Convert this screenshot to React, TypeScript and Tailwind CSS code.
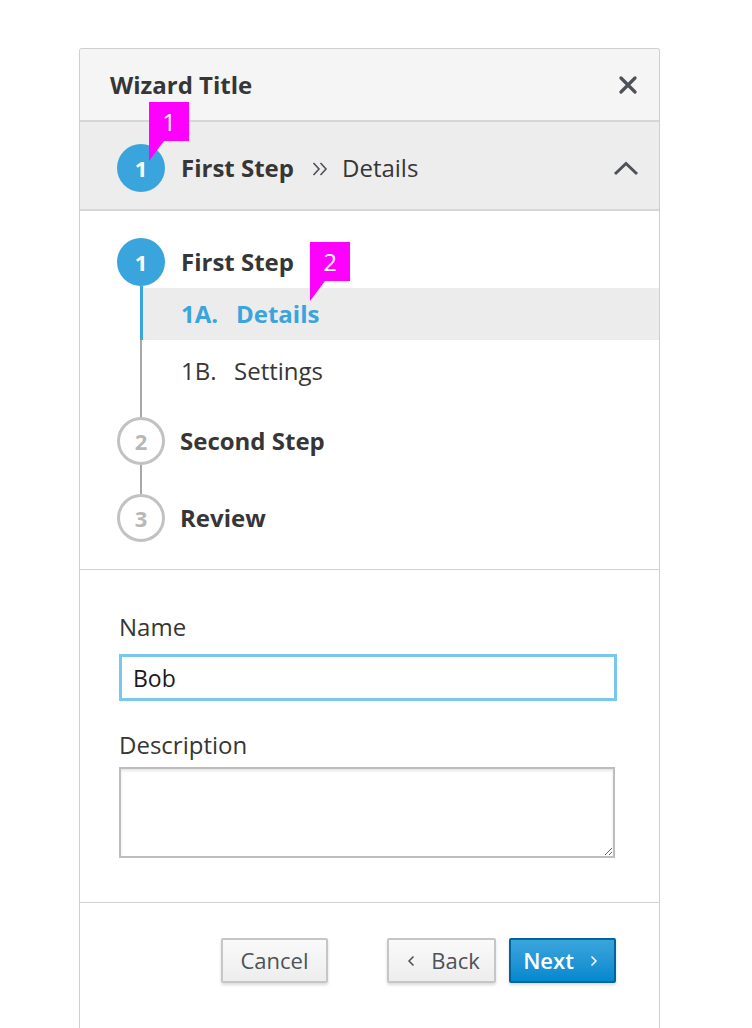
import * as React from "react"
import { ChevronLeft, ChevronRight } from "lucide-react"

function Callout({ n, className }: { n: string; className: string }) {
  return (
    <div className={`absolute ${className}`}>
      <div className="w-[40px] h-[39px] bg-[#ff00ff] text-white text-[24px] leading-[39px] text-center">
        {n}
      </div>
      <svg width="15" height="20" viewBox="0 0 15 20" className="block">
        <polygon points="0,0 15,0 0,20" fill="#ff00ff" />
      </svg>
    </div>
  )
}

function StepCircle({ n, active }: { n: number; active?: boolean }) {
  return active ? (
    <div className="size-[48px] shrink-0 rounded-full bg-[#39a5dc] text-white font-bold text-[22px] flex items-center justify-center">
      {n}
    </div>
  ) : (
    <div className="size-[48px] shrink-0 rounded-full border-[3px] border-[#c2c2c2] bg-white text-[#b8b8b8] font-bold text-[22px] flex items-center justify-center">
      {n}
    </div>
  )
}

export default function App() {
  return (
    <div
      className="min-h-screen bg-white pt-[48px] pl-[79px] text-[#363636]"
      style={{ fontFamily: '"Open Sans", "Noto Sans", sans-serif' }}
    >
      <div className="relative w-[581px] h-[980px] border border-b-0 border-[#cfcfcf] rounded-t-[3px] bg-white">
        {/* header */}
        <div className="h-[73px] bg-[#f5f5f5] border-b-2 border-[#d6d6d6] flex items-center justify-between pl-[30px] pr-[22px] rounded-t-[3px]">
          <h1 className="text-[24px] font-bold pt-[1px]">Wizard Title</h1>
          <svg width="18" height="18" viewBox="0 0 18 18" className="text-[#4d5258]">
            <path d="M2 2 L16 16 M16 2 L2 16" stroke="currentColor" strokeWidth="3.2" strokeLinecap="round" />
          </svg>
        </div>

        {/* current step bar */}
        <div className="h-[89px] bg-[#ededed] border-b-2 border-[#d6d6d6] flex items-center pt-[5px] pl-[37px] pr-[22px]">
          <StepCircle n={1} active />
          <span className="ml-[16px] text-[24px] font-bold">First Step</span>
          <svg width="16" height="14" viewBox="0 0 16 14" className="ml-[18px] mt-[2px] text-[#4d5258]">
            <path d="M1.5 1 L7 7 L1.5 13 M8.5 1 L14 7 L8.5 13" stroke="currentColor" strokeWidth="1.6" fill="none" />
          </svg>
          <span className="ml-[14px] text-[24px]">Details</span>
          <svg width="26" height="15" viewBox="0 0 26 15" className="ml-auto mr-[-2px] text-[#4d5258]">
            <path d="M2 13 L13 2.5 L24 13" stroke="currentColor" strokeWidth="3" fill="none" />
          </svg>
        </div>

        {/* step list */}
        <div className="pt-[27px] pb-[27px] pl-[37px] border-b border-[#d1d1d1]">
          <div className="flex items-center h-[48px]">
            <StepCircle n={1} active />
            <span className="ml-[16px] text-[24px] font-bold">First Step</span>
          </div>
          <div className="flex h-[54px]">
            <div className="w-[26px] flex justify-end">
              <div className="w-[3px] bg-[#39a5dc]" />
            </div>
            <div className="flex-1 pt-[2px]">
              <div className="h-[52px] bg-[#ececec] pl-[38px] flex items-center text-[24px] font-bold text-[#39a5dc]">
                <span className="w-[55px]">1A.</span>
                <span>Details</span>
              </div>
            </div>
          </div>
          <div className="flex h-[77px]">
            <div className="w-[26px] flex justify-end pr-[1px]">
              <div className="w-[2px] bg-[#a8a8a8]" />
            </div>
            <div className="pl-[38px] pt-[13px] text-[24px]">
              <span className="inline-block w-[53px]">1B.</span>
              <span>Settings</span>
            </div>
          </div>
          <div className="flex items-center h-[48px]">
            <StepCircle n={2} />
            <span className="ml-[15px] text-[24px] font-bold">Second Step</span>
          </div>
          <div className="flex h-[29px]">
            <div className="w-[26px] flex justify-end pr-[1px]">
              <div className="w-[2px] bg-[#a8a8a8]" />
            </div>
          </div>
          <div className="flex items-center h-[48px]">
            <StepCircle n={3} />
            <span className="ml-[15px] text-[24px] font-bold">Review</span>
          </div>
        </div>

        {/* form */}
        <div className="px-[39px] pt-[42px] pb-[44px] border-b border-[#d1d1d1]">
          <label className="block text-[24px] leading-[30px]">Name</label>
          <input
            className="mt-[12px] block w-[498px] h-[47px] border-[3px] border-[#77c7ef] px-[11px] text-[23px] text-[#1a1a1a] outline-none"
            defaultValue="Bob"
          />
          <label className="block mt-[29px] text-[24px] leading-[30px]">Description</label>
          <textarea className="mt-[7px] block w-[496px] h-[91px] border-2 border-[#bdbdbd] shadow-[inset_0_2px_3px_rgba(0,0,0,0.1)] outline-none" />
        </div>

        {/* footer */}
        <div className="flex items-center pt-[35px] pl-[141px]">
          <button className="w-[107px] h-[45px] rounded-[2px] border-2 border-[#c6c6c6] bg-gradient-to-b from-[#fafafa] to-[#ededed] text-[22px] text-[#4d5258] shadow-[0_2px_3px_rgba(0,0,0,0.15)]">
            Cancel
          </button>
          <button className="ml-[59px] w-[109px] h-[45px] rounded-[2px] border-2 border-[#c6c6c6] bg-gradient-to-b from-[#fafafa] to-[#ededed] text-[22px] text-[#4d5258] shadow-[0_2px_3px_rgba(0,0,0,0.15)] flex items-center justify-center gap-[12px]">
            <ChevronLeft size={16} strokeWidth={2.5} />
            Back
          </button>
          <button className="ml-[13px] w-[107px] h-[45px] rounded-[2px] border-2 border-[#00659c] bg-gradient-to-b from-[#39a5dc] to-[#0088ce] text-[22px] text-white font-semibold shadow-[0_2px_3px_rgba(0,0,0,0.15)] flex items-center justify-center gap-[12px]">
            Next
            <ChevronRight size={16} strokeWidth={2.5} />
          </button>
        </div>

        <Callout n="1" className="left-[69px] top-[53px]" />
        <Callout n="2" className="left-[230px] top-[193px]" />
      </div>
    </div>
  )
}
